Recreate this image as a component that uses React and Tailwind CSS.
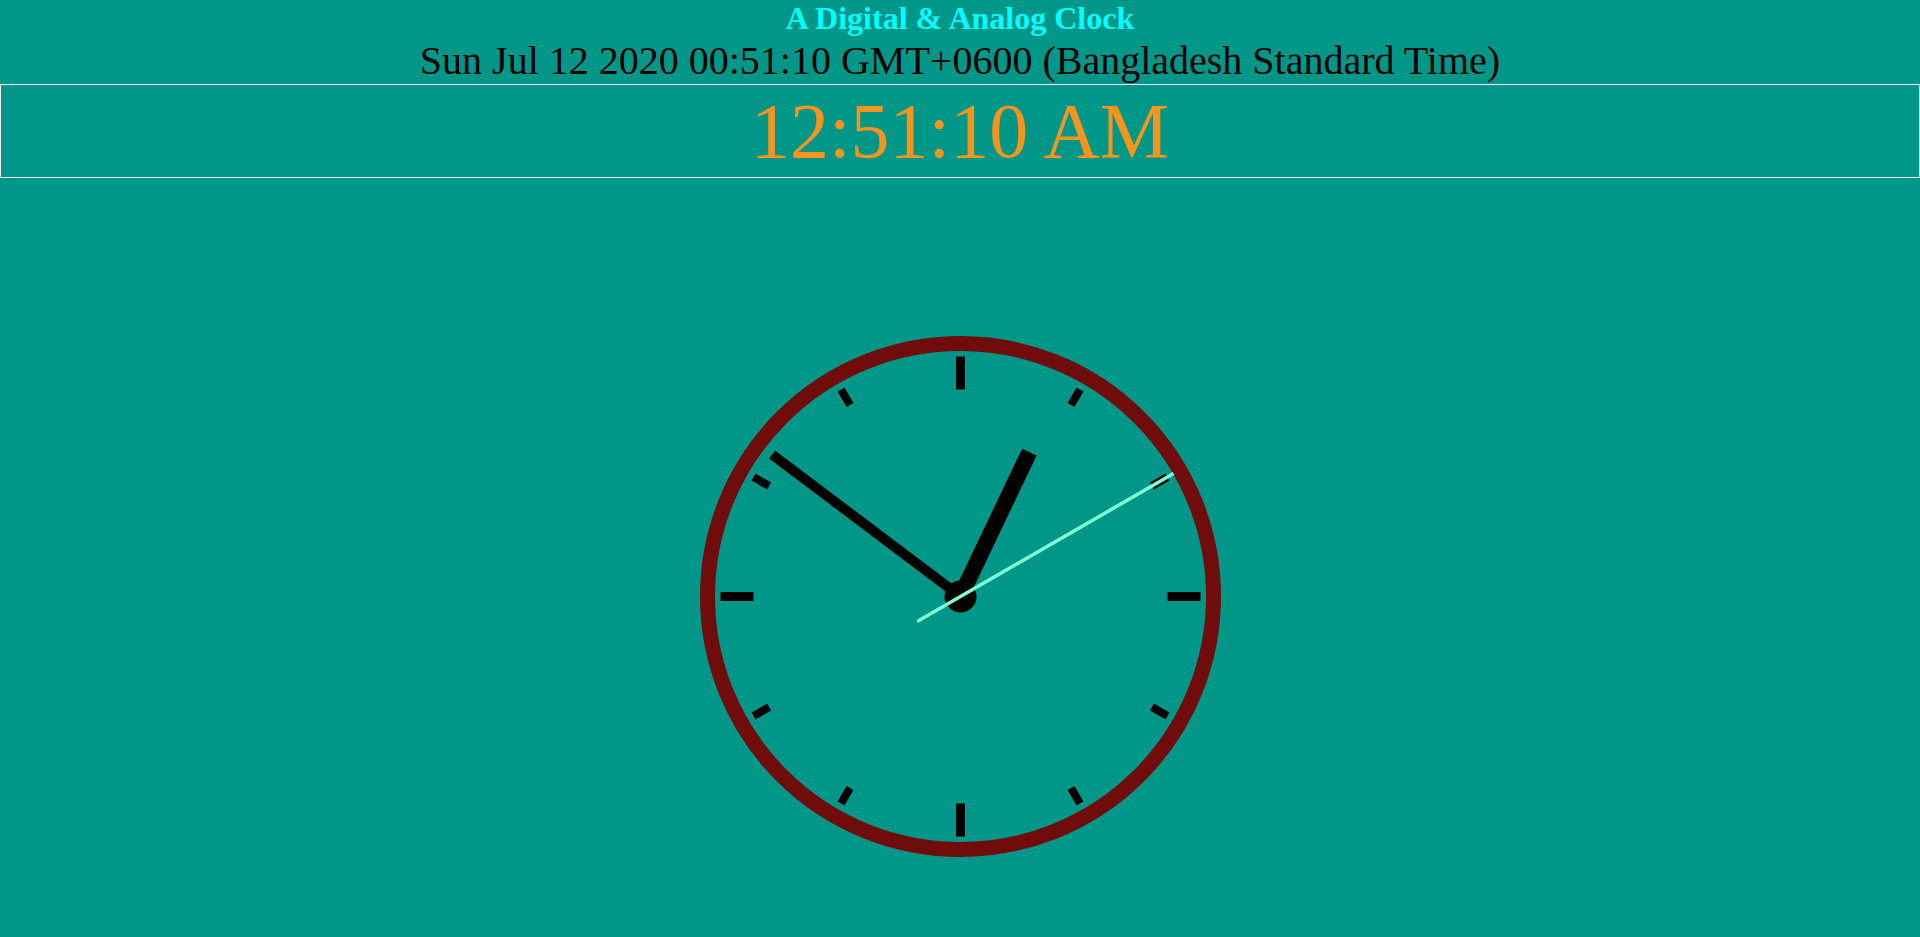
const CX = 260.5;
const CY = 260.5;

// point on the dial at angle (degrees clockwise from 12) and radius r
function pt(deg, r) {
  const a = (deg * Math.PI) / 180;
  return [CX + Math.sin(a) * r, CY - Math.cos(a) * r];
}

function Hand({ deg, from, to, width, color }) {
  const [x1, y1] = pt(deg, from);
  const [x2, y2] = pt(deg, to);
  return <line x1={x1} y1={y1} x2={x2} y2={y2} stroke={color} strokeWidth={width} />;
}

function AnalogClock({ h, m, s }) {
  const secDeg = s * 6;
  const minDeg = (m + s / 60) * 6;
  const hourDeg = ((h % 12) + m / 60) * 30;

  return (
    <svg width="521" height="521" viewBox="0 0 521 521">
      <circle cx={CX} cy={CY} r="253" fill="none" stroke="#700c0c" strokeWidth="15" />
      {Array.from({ length: 12 }).map((_, i) => {
        const major = i % 3 === 0;
        return major ? (
          <Hand key={i} deg={i * 30} from={207} to={240} width={9} color="#000" />
        ) : (
          <Hand key={i} deg={i * 30} from={221} to={239} width={8} color="#000" />
        );
      })}
      <circle cx={CX} cy={CY} r="16" fill="#000" />
      <Hand deg={hourDeg} from={0} to={160} width={16} color="#000" />
      <Hand deg={minDeg} from={0} to={236} width={10} color="#000" />
      <Hand deg={secDeg} from={-50} to={246} width={3.5} color="#7fffd4" />
    </svg>
  );
}

export default function App() {
  return (
    <div className="min-h-screen bg-[#009688] font-['Liberation_Serif',serif]">
      <h1 className="text-center text-[32px] font-bold leading-[normal] text-[#00ffff]">
        A Digital &amp; Analog Clock
      </h1>
      <div className="text-center text-[40px] leading-[normal] text-black">
        Sun Jul 12 2020 00:51:10 GMT+0600 (Bangladesh Standard Time)
      </div>
      <div className="border border-[#f0f0f0] text-center text-[78px] leading-[92px] text-[#f7941d]">
        12:51:10 AM
      </div>
      <div className="mt-[158px] flex justify-center">
        <AnalogClock h={0} m={51} s={10} />
      </div>
    </div>
  );
}
